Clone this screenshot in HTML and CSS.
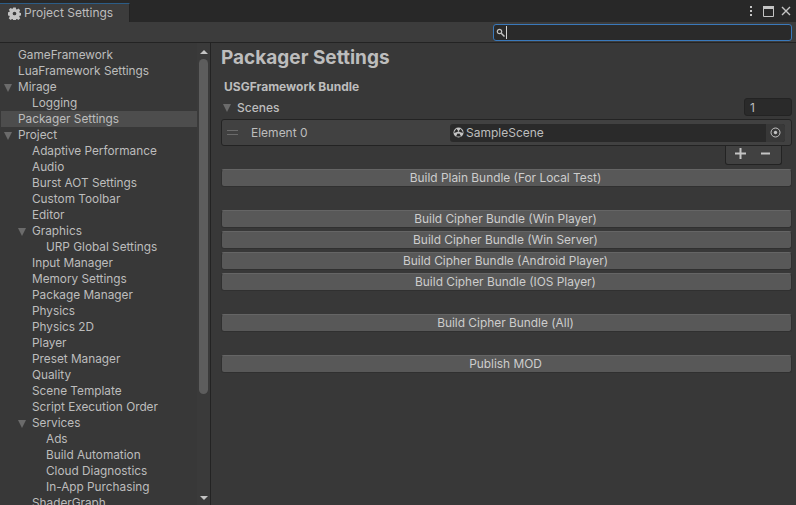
FILE: index.html
```html
<!doctype html>
<html lang="en">
    <head>
        <meta charset="utf-8">
        <title>Project Settings</title>
        <link rel="stylesheet" href="styles.css">
    </head>

    <body>
        <div class="window">
            <div class="tabstrip">
                <div class="tab">
                    <svg class="gear" width="13" height="13" viewBox="0 0 14 14">
                        <path fill="#c4c4c4" fill-rule="evenodd" d="M5.600 .5h2.800l.3 1.800 1 .4 1.500-1 2 1.900-1.100 1.500.4 1 1.900.3v2.800l-1.900.3-.4 1 1.100 1.500-2 1.900-1.500-1-1 .4-.3 1.800H5.600l-.3-1.800-1-.4-1.500 1-2-1.900 1.100-1.500-.4-1-1.900-.3V5.700l1.900-.3.400-1-1.100-1.500 2-1.900 1.500 1 1-.4zM7 5a2 2 0 1 0 0 4 2 2 0 0 0 0-4z"/>
                    </svg>
                    <span>Project Settings</span>
                </div>
                <div class="winbtns">
                    <svg width="4" height="12" viewBox="0 0 4 12"><path fill="#c4c4c4" d="M1 1h2v2H1zM1 5h2v2H1zM1 9h2v2H1z"/></svg>
                    <svg width="11" height="11" viewBox="0 0 11 11"><path fill="none" stroke="#c4c4c4" d="M.5 .5h10v10H.5z"/><path fill="#c4c4c4" d="M0 0h11v3H0z"/></svg>
                    <svg width="10" height="10" viewBox="0 0 10 10"><path fill="none" stroke="#c4c4c4" stroke-width="1.400" d="M1 1l8 8M9 1l-8 8"/></svg>
                </div>
            </div>

            <div class="toolbar">
                <div class="search">
                    <svg width="9" height="9" viewBox="0 0 9 9"><circle cx="3.500" cy="3.500" r="2.200" fill="none" stroke="#c4c4c4" stroke-width="1.200"/><path stroke="#c4c4c4" stroke-width="1.500" d="M5.200 5.200L8.500 8.500"/></svg>
                    <span class="caret"></span>
                </div>
            </div>

            <div class="content">
                <div class="side">
                    <ul class="tree">
                        <li class="lv1">GameFramework</li>
                        <li class="lv1">LuaFramework Settings</li>
                        <li class="lv1 open">Mirage</li>
                        <li class="lv2">Logging</li>
                        <li class="lv1 sel">Packager Settings</li>
                        <li class="lv1 open">Project</li>
                        <li class="lv2">Adaptive Performance</li>
                        <li class="lv2">Audio</li>
                        <li class="lv2">Burst AOT Settings</li>
                        <li class="lv2">Custom Toolbar</li>
                        <li class="lv2">Editor</li>
                        <li class="lv2 open">Graphics</li>
                        <li class="lv3">URP Global Settings</li>
                        <li class="lv2">Input Manager</li>
                        <li class="lv2">Memory Settings</li>
                        <li class="lv2">Package Manager</li>
                        <li class="lv2">Physics</li>
                        <li class="lv2">Physics 2D</li>
                        <li class="lv2">Player</li>
                        <li class="lv2">Preset Manager</li>
                        <li class="lv2">Quality</li>
                        <li class="lv2">Scene Template</li>
                        <li class="lv2">Script Execution Order</li>
                        <li class="lv2 open">Services</li>
                        <li class="lv3">Ads</li>
                        <li class="lv3">Build Automation</li>
                        <li class="lv3">Cloud Diagnostics</li>
                        <li class="lv3">In-App Purchasing</li>
                        <li class="lv2">ShaderGraph</li>
                    </ul>
                    <div class="scrollbar">
                        <span class="arrow up"></span>
                        <span class="thumb"></span>
                        <span class="arrow down"></span>
                    </div>
                </div>

                <div class="panel">
                    <h1>Packager Settings</h1>
                    <div class="bundle">USGFramework Bundle</div>
                    <div class="scenes">
                        <span class="scenes-name">Scenes</span>
                        <span class="count">1</span>
                    </div>
                    <div class="element">
                        <span class="handle"></span>
                        <span class="element-name">Element 0</span>
                        <div class="field">
                            <svg class="unity" width="11" height="11" viewBox="0 0 11 11">
                                <circle cx="5.500" cy="5.500" r="5" fill="#c4c4c4"/>
                                <path fill="#282828" d="M5.500 4.500L3.500 1.800 1.500 4.500 1.200 6zM5.500 4.500L7.500 1.800 9.500 4.500 9.800 6zM4.500 6.500h2L8 9.500H3z"/>
                                <circle cx="5.500" cy="5.500" r="1" fill="#c4c4c4"/>
                            </svg>
                            <span class="field-text">SampleScene</span>
                            <span class="picker">
                                <svg width="11" height="11" viewBox="0 0 11 11"><circle cx="5.500" cy="5.500" r="4.500" fill="none" stroke="#c4c4c4"/><circle cx="5.500" cy="5.500" r="1.700" fill="#c4c4c4"/></svg>
                            </span>
                        </div>
                    </div>
                    <div class="footer">
                        <div class="addremove">
                            <svg width="11" height="11" viewBox="0 0 11 11"><path fill="#c4c4c4" d="M4.500 0h2v4.500H11v2H6.500V11h-2V6.500H0v-2h4.500z"/></svg>
                            <svg width="9" height="11" viewBox="0 0 9 11"><path fill="#c4c4c4" d="M0 4.500h9v2H0z"/></svg>
                        </div>
                    </div>

                    <button class="btn first">Build Plain Bundle (For Local Test)</button>

                    <div class="group">
                        <button class="btn">Build Cipher Bundle (Win Player)</button>
                        <button class="btn">Build Cipher Bundle (Win Server)</button>
                        <button class="btn">Build Cipher Bundle (Android Player)</button>
                        <button class="btn">Build Cipher Bundle (IOS Player)</button>
                    </div>

                    <button class="btn single">Build Cipher Bundle (All)</button>
                    <button class="btn single">Publish MOD</button>
                </div>
            </div>
        </div>
    </body>
</html>
```

FILE: styles.css
```css
html{
    font-size: 100%;
    font-family: Inter, 'Noto Sans', sans-serif;
}
body{
    margin: 0;
    background: #383838;
    color: #bdbdbd;
    font-size: 12px;
}
.window{
    display: flex;
    flex-direction: column;
    height: 505px;
    overflow: hidden;
}
.tabstrip{
    display: flex;
    justify-content: space-between;
    height: 22px;
    background: #282828;
    padding-top: 3px;
    box-sizing: border-box;
}
.tab{
    display: flex;
    align-items: center;
    gap: 3px;
    width: 130px;
    box-sizing: border-box;
    padding-left: 8px;
    background: #3c3c3c;
    border-top: 1px solid #2c5d87;
    border-right: 1px solid #232323;
    line-height: 18px;
}
.winbtns{
    display: flex;
    align-items: center;
    gap: 7px;
    padding-right: 5px;
    padding-bottom: 3px;
}
.winbtns svg:first-child{
    margin-right: 3px;
}
.toolbar{
    display: flex;
    justify-content: flex-end;
    height: 21px;
    box-sizing: border-box;
    padding: 2px 4px 0 0;
    background: #3c3c3c;
    border-bottom: 1px solid #232323;
}
.search{
    display: flex;
    align-items: center;
    gap: 1px;
    width: 299px;
    height: 17px;
    box-sizing: border-box;
    padding-left: 2px;
    background: #2a2a2a;
    border: 1px solid #3a79bb;
    border-radius: 3px;
}
.caret{
    width: 1px;
    height: 13px;
    background: #d2d2d2;
}
.content{
    flex: 1;
    display: flex;
    min-height: 0;
}
.side{
    display: flex;
    width: 211px;
    flex-shrink: 0;
    box-sizing: border-box;
    border-right: 1px solid #232323;
}
.tree{
    flex: 1;
    list-style: none;
    margin: 0;
    padding: 4px 0 0 1px;
    overflow: hidden;
    font-size: 11.8px;
}
.tree li{
    position: relative;
    height: 16px;
    line-height: 16px;
    white-space: nowrap;
}
.lv1{
    padding-left: 17px;
}
.lv2{
    padding-left: 31px;
}
.lv3{
    padding-left: 45px;
}
.sel{
    background: #4d4d4d;
}
.open::before{
    content: "";
    position: absolute;
    top: 5px;
    margin-left: -14px;
    border-left: 4px solid transparent;
    border-right: 4px solid transparent;
    border-top: 8px solid #6b6b6b;
}
.scrollbar{
    position: relative;
    width: 13px;
    display: flex;
    flex-direction: column;
    align-items: center;
    background: #3a3a3a;
}
.thumb{
    width: 9px;
    height: 335px;
    margin-top: 5px;
    border-radius: 5px;
    background: #5d5d5d;
}
.arrow{
    border-left: 4px solid transparent;
    border-right: 4px solid transparent;
}
.up{
    margin-top: 7px;
    border-bottom: 4px solid #c4c4c4;
}
.down{
    position: absolute;
    bottom: 5px;
    border-top: 4px solid #c4c4c4;
}
.panel{
    flex: 1;
    padding: 0 4px 0 10px;
    min-width: 0;
}
h1{
    margin: 0;
    padding-top: 4px;
    height: 26px;
    line-height: 22px;
    font-size: 19px;
    font-weight: 700;
    color: #bdbdbd;
    box-sizing: content-box;
}
.bundle{
    margin-top: 6px;
    padding-left: 3px;
    height: 18px;
    line-height: 16px;
    font-weight: 700;
}
.scenes{
    display: flex;
    justify-content: space-between;
    align-items: center;
    height: 22px;
    margin-top: -1px;
}
.scenes-name{
    position: relative;
    padding-left: 16px;
    font-weight: 500;
}
.scenes-name::before{
    content: "";
    position: absolute;
    left: 2px;
    top: 4px;
    border-left: 4px solid transparent;
    border-right: 4px solid transparent;
    border-top: 8px solid #6b6b6b;
}
.count{
    width: 48px;
    height: 18px;
    line-height: 17px;
    box-sizing: border-box;
    padding-left: 5px;
    background: #2a2a2a;
    border: 1px solid #232323;
    border-radius: 3px;
}
.element{
    display: flex;
    align-items: center;
    height: 27px;
    box-sizing: border-box;
    margin-top: 1px;
    border: 1px solid #232323;
    border-radius: 3px;
    background: #414141;
    padding: 0 6px 0 5px;
}
.handle{
    width: 11px;
    height: 3px;
    border-top: 1px solid #6b6b6b;
    border-bottom: 1px solid #6b6b6b;
}
.element-name{
    margin-left: 13px;
    width: 199px;
}
.field{
    flex: 1;
    display: flex;
    align-items: center;
    height: 18px;
    padding-left: 3px;
    background: #2a2a2a;
    border-radius: 3px;
}
.field-text{
    flex: 1;
    margin-left: 2px;
}
.picker{
    display: flex;
    align-items: center;
    justify-content: center;
    width: 19px;
    height: 18px;
    background: #383838;
    border-radius: 0 3px 3px 0;
}
.footer{
    display: flex;
    justify-content: flex-end;
    padding-right: 10px;
    height: 20px;
}
.addremove{
    display: flex;
    align-items: center;
    gap: 15px;
    width: 57px;
    height: 19px;
    box-sizing: border-box;
    padding: 0 0 3px 9px;
    background: #414141;
    border: 1px solid #232323;
    border-top: 0;
    border-radius: 0 0 3px 3px;
}
.btn{
    display: block;
    width: 100%;
    height: 18px;
    padding: 0 2px 0 0;
    border: 1px solid #303030;
    border-top-color: #656565;
    border-radius: 3px;
    background: #585858;
    color: #cdcdcd;
    font-family: inherit;
    font-size: 11.9px;
    line-height: 16px;
}
.first{
    margin-top: 3px;
}
.group{
    margin-top: 23px;
    display: flex;
    flex-direction: column;
    gap: 3px;
}
.single{
    margin-top: 23px;
}
```
